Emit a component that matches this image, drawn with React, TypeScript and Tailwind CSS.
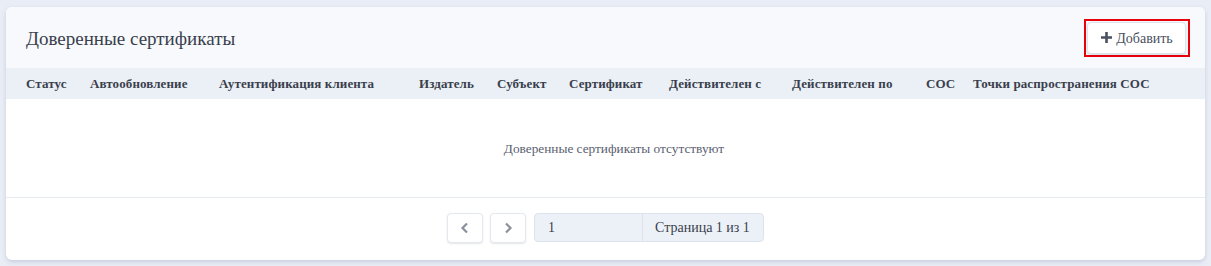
import React from "react";

const cols: { label: string; w: string }[] = [
  { label: "Статус", w: "w-[64px]" },
  { label: "Автообновление", w: "w-[129px]" },
  { label: "Аутентификация клиента", w: "w-[200px]" },
  { label: "Издатель", w: "w-[78px]" },
  { label: "Субъект", w: "w-[72px]" },
  { label: "Сертификат", w: "w-[100px]" },
  { label: "Действителен с", w: "w-[123px]" },
  { label: "Действителен по", w: "w-[134px]" },
  { label: "СОС", w: "w-[47px]" },
  { label: "Точки распространения СОС", w: "w-[220px]" },
];

export default function App() {
  return (
    <div
      className="w-[1211px] h-[266px] bg-[#e9edf5] pt-[7px] px-[6px]"
      style={{ fontFamily: '"Liberation Serif", "Times New Roman", serif' }}
    >
      <div className="w-[1199px] h-[253px] bg-white rounded-[6px] shadow-[0_2px_4px_rgba(140,150,180,0.35)] overflow-hidden flex flex-col">
        <div className="h-[61px] bg-[#f7f9fc] flex items-center justify-between pl-[20px] pr-[15px]">
          <h1 className="text-[19px] text-[#3a3f4c] leading-none pt-[2px]">Доверенные сертификаты</h1>
          <div className="border-2 border-[#e8000b] p-[1px] pr-[2px] mt-[1px]">
            <button className="h-[32px] w-[99px] bg-white rounded-[4px] border border-[#dfe3ea] shadow-[0_1px_2px_rgba(0,0,0,0.12)] flex items-center justify-center gap-[3px] text-[14px] text-[#4a5060]">
              <svg width="13" height="13" viewBox="0 0 13 13" className="mb-[1px]">
                <path d="M6.5 1v11M1 6.5h11" stroke="#4a5160" strokeWidth="2.6" />
              </svg>
              <span>Добавить</span>
            </button>
          </div>
        </div>
        <div className="h-[31px] bg-[#ebf0f7] flex items-center pl-[20px] text-[13px] font-bold text-[#3a3f4c] tracking-[0.1px]">
          {cols.map((c) => (
            <div key={c.label} className={`${c.w} shrink-0 whitespace-nowrap`}>
              {c.label}
            </div>
          ))}
        </div>
        <div className="h-[99px] flex items-center justify-center border-b border-[#e6ecf2] text-[13.3px] text-[#5a6070] pt-[2px] pl-[17px]">
          Доверенные сертификаты отсутствуют
        </div>
        <div className="flex-1 flex items-start justify-center pt-[15px] gap-[7px]">
          <button className="w-[36px] h-[30px] bg-white rounded-[4px] border border-[#e3e7ee] shadow-[0_1px_2px_rgba(0,0,0,0.1)] flex items-center justify-center">
            <svg width="10" height="12" viewBox="0 0 10 12">
              <path d="M7 1.5 L2.5 6 L7 10.5" stroke="#8a909c" strokeWidth="2.2" fill="none" />
            </svg>
          </button>
          <button className="w-[36px] h-[30px] bg-white rounded-[4px] border border-[#e3e7ee] shadow-[0_1px_2px_rgba(0,0,0,0.1)] flex items-center justify-center">
            <svg width="10" height="12" viewBox="0 0 10 12">
              <path d="M3 1.5 L7.5 6 L3 10.5" stroke="#8a909c" strokeWidth="2.2" fill="none" />
            </svg>
          </button>
          <div className="ml-[1px] h-[29px] w-[230px] flex bg-[#ecf1f8] border border-[#dde3ec] rounded-[4px] text-[14px] text-[#3a3f4c]">
            <div className="w-[108px] border-r border-[#dde3ec] flex items-center pl-[13px]">1</div>
            <div className="flex-1 flex items-center pl-[12px]">Страница 1 из 1</div>
          </div>
        </div>
      </div>
    </div>
  );
}
